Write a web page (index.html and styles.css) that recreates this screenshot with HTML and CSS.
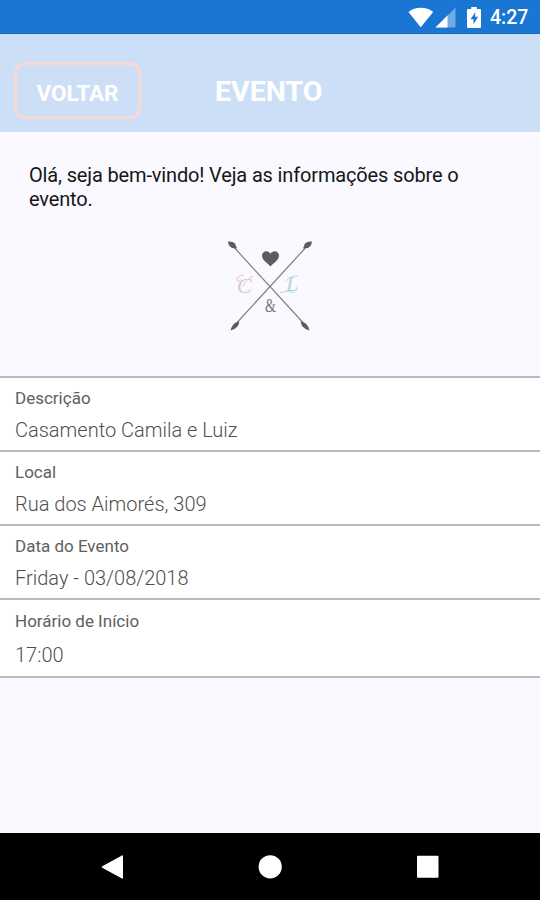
FILE: index.html
```
<!DOCTYPE html>
<html lang="pt-BR">
<head>
<meta charset="utf-8">
<title>Evento</title>
<link rel="stylesheet" href="styles.css">
</head>
<body>
<div class="status">
  <svg class="status-icons" width="84" height="34" viewBox="0 0 84 34">
    <path d="M12.700 27.200 0.500 12C4 9 8 7.700 12.700 7.700s9 1.300 12.500 4.300z" fill="#fff"/>
    <path d="M27.500 27.500 47.500 7.500v20z" fill="#fff" opacity=".38"/>
    <path d="M27.500 27.500 39.500 15.500v12z" fill="#fff"/>
    <path d="M60 9h3.200V7h5.600v2H72q1 0 1 1v17q0 1-1 1H60q-1 0-1-1V10q0-1 1-1z" fill="#fff"/>
    <path d="M67.500 12 62.500 19.300h3v5l4.500-7.500h-3z" fill="#1976d2"/>
  </svg>
  <span class="clock">4:27</span>
</div>
<header class="bar">
  <button class="back">VOLTAR</button>
  <h1 class="title">EVENTO</h1>
</header>
<main class="content">
  <p class="welcome">Olá, seja bem-vindo! Veja as informações sobre o evento.</p>
  <svg class="monogram" width="90" height="96" viewBox="0 0 90 96">
    <g stroke="#808080" stroke-width="1.200">
      <path d="M6 5 83 89M84 5 7 89"/>
    </g>
    <g fill="#5c5c5c">
      <path d="M3 2.500Q7.500 2 10 4.500L12 9.500 7 9Q3.500 7 3 2.500z"/>
      <path d="M87 2.500Q82.500 2 80 4.500L78 9.500 83 9Q86.500 7 87 2.500z"/>
      <path d="M5.500 91.500Q7 86 10 84L14.500 82.500 13 87Q10 90.500 5.500 91.500z"/>
      <path d="M84.500 91.500Q83 86 80 84L75.500 82.500 77 87Q80 90.500 84.500 91.500z"/>
      <path d="M45.500 27.500C42 23.500 37 21.300 37 16.800 37 11.500 43.500 10.800 45.500 14.800 47.500 10.800 54 11.500 54 16.800 54 21.300 49 23.500 45.500 27.500z"/>
    </g>
    <text class="script pink" x="12" y="54">C</text>
    <path class="swash pink-line" d="M19 36Q11 37 12 41.500q1.500 2 4-1M28 37q-7 3-10 11"/>
    <text class="script aqua" x="61" y="52">L</text>
    <path class="swash aqua-line" d="M61 42q4-5 12-5.500M55 53.500q8-2.500 15 0"/>
    <text class="amp" x="40" y="73" textLength="11" lengthAdjust="spacingAndGlyphs">&amp;</text>
  </svg>
</main>
<dl class="details">
  <div class="row"><dt>Descrição</dt><dd>Casamento Camila e Luiz</dd></div>
  <div class="row"><dt>Local</dt><dd>Rua dos Aimorés, 309</dd></div>
  <div class="row"><dt>Data do Evento</dt><dd>Friday - 03/08/2018</dd></div>
  <div class="row last"><dt>Horário de Início</dt><dd>17:00</dd></div>
</dl>
<nav class="nav">
  <svg width="24" height="26" viewBox="0 0 24 26"><path d="M22 1.800v22.400q0 .8-1 .3L1.200 13.700q-1-.7 0-1.400L21 1.500q1-.5 1 .3z" fill="#fff"/></svg>
  <svg width="24" height="26" viewBox="0 0 24 26"><circle cx="12.200" cy="12.800" r="11.600" fill="#fff"/></svg>
  <svg width="24" height="26" viewBox="0 0 24 26"><rect x="2" y="1.800" width="21.500" height="22" rx="1" fill="#fff"/></svg>
</nav>
</body>
</html>
```
FILE: styles.css
```
* { box-sizing: border-box; }
body {
  margin: 0;
  width: 540px;
  height: 900px;
  display: flex;
  flex-direction: column;
  background: #f9f9ff;
  font-family: Roboto, sans-serif;
  overflow: hidden;
}
.status {
  height: 34px;
  flex: none;
  display: flex;
  align-items: center;
  padding-left: 408px;
  background: #1976d2;
  border-bottom: 1px solid #1669bd;
}
.status-icons { flex: none; }
.clock {
  margin: 3px 0 0 -2px;
  color: #fff;
  font-size: 19.500px;
  line-height: 24px;
  font-weight: 500;
}
.bar {
  height: 98px;
  flex: none;
  display: flex;
  align-items: flex-start;
  padding: 28px 0 0 14px;
  background: #cddff7;
}
.back {
  width: 127px;
  height: 57px;
  padding: 4px 0 0;
  border: 3px solid #f8d8d5;
  border-radius: 11px;
  background: transparent;
  color: #fff;
  font: 700 22.500px/28px Roboto, sans-serif;
}
.title {
  margin: 13px 0 0 74px;
  color: #fff;
  font-size: 28.500px;
  line-height: 34px;
  font-weight: 700;
}
.content {
  height: 244px;
  flex: none;
  padding: 32px 28px 0;
}
.welcome {
  margin: 0 0 0 1px;
  color: #161616;
  font-size: 20px;
  line-height: 23.500px;
  letter-spacing: -0.150px;
}
.monogram {
  display: block;
  margin: 28px auto 0;
}
.script { font: italic 22px "Liberation Serif", serif; }
.pink { fill: #e3c5c9; }
.aqua { fill: #b5d6df; }
.swash { fill: none; stroke-width: 0.900; }
.pink-line { stroke: #dfc3c7; }
.aqua-line { stroke: #b5d6df; }
.amp { font: 19px "Liberation Serif", serif; fill: #777; }
.details {
  margin: 0;
  flex: none;
  border-top: 2px solid #bababa;
  background: #fff;
}
.row {
  height: 74px;
  padding: 10px 15px 0;
  border-bottom: 2px solid #bababa;
}
.last { height: 78px; padding-top: 11px; }
dt {
  color: #606060;
  font-size: 17px;
  line-height: 20px;
}
dd {
  margin: 10px 0 0;
  color: #505050;
  font-size: 20px;
  font-weight: 300;
  line-height: 24px;
}
.last dd { margin-top: 12px; }
.nav {
  height: 67px;
  margin-top: auto;
  flex: none;
  display: flex;
  align-items: center;
  justify-content: space-between;
  padding: 0 101px;
  background: #000;
}
```
